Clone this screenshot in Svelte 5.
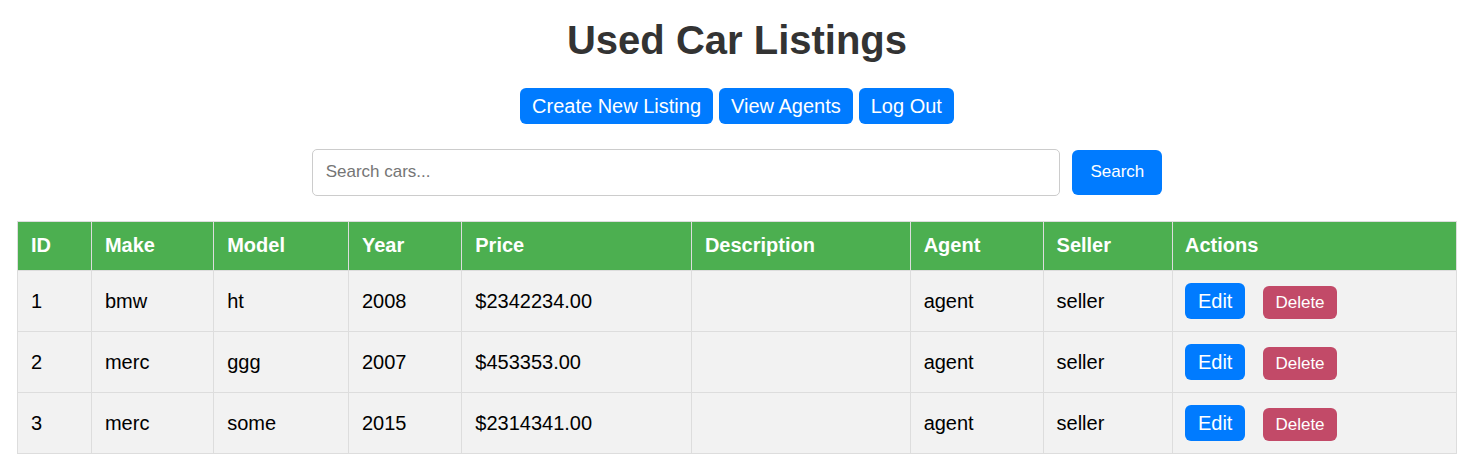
<script>
  const columns = ['ID', 'Make', 'Model', 'Year', 'Price', 'Description', 'Agent', 'Seller', 'Actions'];

  let search = $state('');
  let cars = $state([
    { id: 1, make: 'bmw', model: 'ht', year: 2008, price: '2342234.00', description: '', agent: 'agent', seller: 'seller' },
    { id: 2, make: 'merc', model: 'ggg', year: 2007, price: '453353.00', description: '', agent: 'agent', seller: 'seller' },
    { id: 3, make: 'merc', model: 'some', year: 2015, price: '2314341.00', description: '', agent: 'agent', seller: 'seller' }
  ]);

  function remove(id) {
    cars = cars.filter((car) => car.id !== id);
  }
</script>

<main>
  <h1>Used Car Listings</h1>

  <nav>
    <a class="button" href="#create">Create New Listing</a>
    <a class="button" href="#agents">View Agents</a>
    <a class="button" href="#logout">Log Out</a>
  </nav>

  <form onsubmit={(event) => event.preventDefault()}>
    <input type="text" aria-label="Search cars" placeholder="Search cars..." bind:value={search} />
    <button class="search" type="submit">Search</button>
  </form>

  <table>
    <thead>
      <tr>
        {#each columns as column}
          <th scope="col">{column}</th>
        {/each}
      </tr>
    </thead>
    <tbody>
      {#each cars as car (car.id)}
        <tr>
          <td>{car.id}</td>
          <td>{car.make}</td>
          <td>{car.model}</td>
          <td>{car.year}</td>
          <td>${car.price}</td>
          <td>{car.description}</td>
          <td>{car.agent}</td>
          <td>{car.seller}</td>
          <td>
            <div class="actions">
              <a class="button" href="#edit-{car.id}">Edit</a>
              <button class="delete" type="button" onclick={() => remove(car.id)}>Delete</button>
            </div>
          </td>
        </tr>
      {/each}
    </tbody>
  </table>
</main>

<style>
  main {
    padding: 17px;
    font-family: "Liberation Sans", Arial, sans-serif;
    font-size: 20px;
    line-height: 24px;
    color: #000;
  }

  h1 {
    margin: 0 0 24px;
    font-size: 40px;
    line-height: 47px;
    text-align: center;
    color: #333;
  }

  nav {
    display: flex;
    justify-content: center;
    gap: 6px;
    margin-bottom: 25px;
  }

  .button {
    padding: 6px 12px;
    border-radius: 6px;
    background: #007bff;
    color: #fff;
    text-decoration: none;
  }

  form {
    display: flex;
    justify-content: center;
    align-items: center;
    gap: 12px;
    margin-bottom: 25px;
  }

  input {
    box-sizing: border-box;
    width: 52%;
    height: 47px;
    padding: 0 13px 2px;
    border: 1px solid #ccc;
    border-radius: 5px;
    font: inherit;
    font-size: 17px;
  }

  button {
    border: 0;
    border-radius: 6px;
    font: inherit;
    font-size: 17px;
    color: #fff;
    cursor: pointer;
  }

  .search {
    height: 45px;
    padding: 0 18px 2px;
    background: #007bff;
  }

  .delete {
    height: 33px;
    padding: 0 12px;
    background: #c24a68;
  }

  table {
    width: 100%;
    border-collapse: collapse;
  }

  th,
  td {
    padding: 12px 12px 12px 13px;
    border: 1px solid #ddd;
    text-align: left;
  }

  th {
    padding-top: 11px;
    padding-bottom: 13px;
    background: #4caf50;
    color: #fff;
  }

  th:last-child,
  td:last-child {
    padding-left: 12px;
  }

  tbody tr {
    background: #f2f2f2;
  }

  .actions {
    display: flex;
    align-items: flex-end;
    gap: 18px;
  }

  .actions .button {
    padding: 6px 13px;
  }
</style>
